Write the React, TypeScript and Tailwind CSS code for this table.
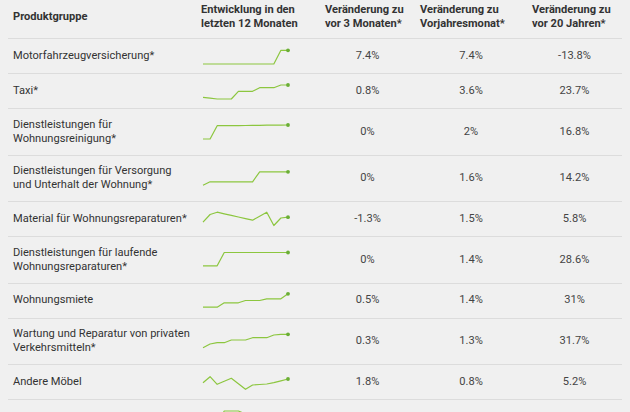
import React from "react";

type Row = {
  label: string[];
  spark: number[];
  m3: string;
  vj: string;
  y20: string;
};

// spark values: y offset in px inside a 17px high box (0 = top), 13 points
const rows: Row[] = [
  {
    label: ["Motorfahrzeugversicherung*"],
    spark: [16, 16, 16, 16, 16, 16, 16, 16, 16, 16, 16, 2.3, 2.3],
    m3: "7.4%",
    vj: "7.4%",
    y20: "-13.8%",
  },
  {
    label: ["Taxi*"],
    spark: [14.3, 15.2, 16, 16, 16, 8.3, 8.3, 8.3, 4.7, 4.7, 4.7, 2, 2],
    m3: "0.8%",
    vj: "3.6%",
    y20: "23.7%",
  },
  {
    label: ["Dienstleistungen für", "Wohnungsreinigung*"],
    spark: [16, 16, 2.7, 2.7, 2.6, 2.6, 2.5, 2.4, 2.3, 2.2, 2.2, 2.1, 2],
    m3: "0%",
    vj: "2%",
    y20: "16.8%",
  },
  {
    label: ["Dienstleistungen für Versorgung", "und Unterhalt der Wohnung*"],
    spark: [15.2, 11.8, 11.8, 11.8, 11.8, 11.8, 11.8, 11.8, 1.8, 1.8, 1.8, 1.8, 1.8],
    m3: "0%",
    vj: "1.6%",
    y20: "14.2%",
  },
  {
    label: ["Material für Wohnungsreparaturen*"],
    spark: [11.2, 3.5, 1.2, 2.8, 4.4, 6, 7.6, 9.2, 5.2, 1.2, 14.5, 7, 6.2],
    m3: "-1.3%",
    vj: "1.5%",
    y20: "5.8%",
  },
  {
    label: ["Dienstleistungen für laufende", "Wohnungsreparaturen*"],
    spark: [14.8, 14.8, 14.8, 1.5, 1.5, 1.5, 1.5, 1.5, 1.5, 1.5, 1.5, 1.5, 1.5],
    m3: "0%",
    vj: "1.4%",
    y20: "28.6%",
  },
  {
    label: ["Wohnungsmiete"],
    spark: [15.2, 15.2, 15.2, 10.8, 10.8, 10.8, 8.5, 8.5, 8.5, 6.8, 6.8, 6.8, 1.8],
    m3: "0.5%",
    vj: "1.4%",
    y20: "31%",
  },
  {
    label: ["Wartung und Reparatur von privaten", "Verkehrsmitteln*"],
    spark: [14.7, 11, 9.7, 9.7, 7, 7, 7, 4.7, 4.7, 4.7, 2, 1.3, 1.3],
    m3: "0.3%",
    vj: "1.3%",
    y20: "31.7%",
  },
  {
    label: ["Andere Möbel"],
    spark: [8.7, 2.7, 10.3, 7.3, 4.3, 9.8, 15.3, 11, 10.5, 10, 8.7, 6.8, 5],
    m3: "1.8%",
    vj: "0.8%",
    y20: "5.2%",
  },
  {
    // next row, only the top of its chart is on screen
    label: [""],
    spark: [15, 15, 15, 2, 2, 2, 5, 7, 7, 8, 8, 9, 9],
    m3: "",
    vj: "",
    y20: "",
  },
];

function Sparkline({ data }: { data: number[] }) {
  const pts = data.map((y, i) => `${(3 + i * 7.083).toFixed(2)},${y}`).join(" ");
  const last = data[data.length - 1];
  return (
    <svg width="92" height="17" viewBox="0 0 92 17" className="block overflow-visible">
      <polyline points={pts} fill="none" stroke="#8cc63f" strokeWidth="1.2" strokeLinejoin="round" />
      <circle cx={3 + 12 * 7.083} cy={last} r="1.9" fill="#6aae35" />
    </svg>
  );
}

export default function App() {
  return (
    <div className="w-[630px] h-[412px] overflow-hidden bg-[#f0f0f0] font-['Roboto',sans-serif] text-[11.1px]">
      <div className="mx-[8px]">
        {/* Header */}
        <div className="grid grid-cols-[188px_124px_95px_112px_95px] border-b border-[#dcdcdc] pt-[3px] pb-[7px] font-bold text-[#333] leading-[14px]">
          <div className="pl-[5px] flex items-center">Produktgruppe</div>
          <div className="pl-[5px]">
            Entwicklung in den
            <br />
            letzten 12 Monaten
          </div>
          <div className="pl-[5px]">
            Veränderung zu
            <br />
            vor 3 Monaten*
          </div>
          <div className="pl-[5px]">
            Veränderung zu
            <br />
            Vorjahresmonat*
          </div>
          <div className="pl-[5px]">
            Veränderung zu
            <br />
            vor 20 Jahren*
          </div>
        </div>

        {/* Rows */}
        {rows.map((r, i) => (
          <div
            key={i}
            className="grid grid-cols-[188px_124px_95px_112px_95px] items-center border-b border-[#dcdcdc] py-[8.5px] leading-[14.25px]"
          >
            <div className="pl-[5px] text-[#333] whitespace-nowrap">
              {r.label.map((l, j) => (
                <div key={j}>{l}</div>
              ))}
            </div>
            <div className="pl-[4px]">
              <Sparkline data={r.spark} />
            </div>
            <div className="text-center text-[#444]">{r.m3}</div>
            <div className="text-center text-[#444]">{r.vj}</div>
            <div className="text-center text-[#444]">{r.y20}</div>
          </div>
        ))}
      </div>
    </div>
  );
}
